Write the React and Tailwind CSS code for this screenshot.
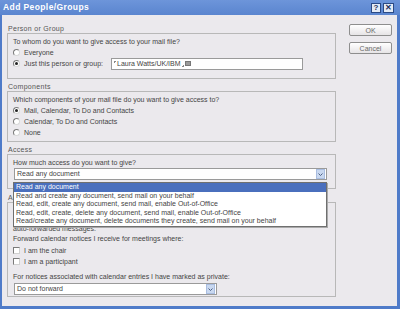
import React from "react";

const Radio = ({ checked }) => (
  <span className="w-[7px] h-[7px] rounded-full bg-white border border-[#7a7a7a] border-r-[#d8d8d8] border-b-[#d8d8d8] flex items-center justify-center shrink-0">
    {checked && <span className="w-[3px] h-[3px] rounded-full bg-[#222]" />}
  </span>
);

const Check = () => (
  <span className="w-[7px] h-[7px] bg-white border border-[#7a7a7a] border-r-[#d0d0d0] border-b-[#d0d0d0] shrink-0" />
);

const Arrow = () => (
  <span className="w-[9px] h-[10px] bg-[#c9d8f0] border border-[#a9bde0] flex items-center justify-center">
    <svg width="5" height="3" viewBox="0 0 5 3">
      <path d="M0.5 0.5 L2.5 2.5 L4.5 0.5" fill="none" stroke="#4d6185" strokeWidth="1" />
    </svg>
  </span>
);

const Line = ({ children, className = "" }) => (
  <div className={`h-[11px] leading-[11px] flex items-center gap-[4px] whitespace-nowrap ${className}`}>{children}</div>
);

const Label = ({ children }) => (
  <div className="h-[9px] leading-[9px] pl-[1px] text-[#555] tracking-[0.3px] whitespace-nowrap">{children}</div>
);

const App = () => {
  const options = [
    "Read any document",
    "Read and create any document, send mail on your behalf",
    "Read, edit, create any document, send mail, enable Out-of-Office",
    "Read, edit, create, delete any document, send mail, enable Out-of-Office",
    "Read/create any document, delete documents they create, send mail on your behalf",
  ];

  return (
    <div className="w-[400px] h-[309px] bg-[#4f7bc9] flex flex-col pl-[2px] pr-[3px] pb-[3px] font-['Liberation_Sans',Arial,sans-serif] text-[7px] text-[#444] overflow-hidden">
      <div className="h-[15px] -ml-[2px] -mr-[3px] bg-gradient-to-b from-[#6d95da] to-[#5a85cf] flex items-center justify-between pl-[3px] pr-[6px]">
        <span className="text-white font-bold text-[8.5px] tracking-[0.4px]">Add People/Groups</span>
        <div className="flex gap-[2px]">
          <span className="w-[10px] h-[10px] bg-[#e4ebf6] border border-[#2b4a85] flex items-center justify-center text-[#1d2f5a] font-bold text-[8px] leading-none">?</span>
          <span className="w-[11px] h-[10px] bg-[#e4ebf6] border border-[#2b4a85] flex items-center justify-center text-[#1d2f5a] font-bold text-[8px] leading-none">✕</span>
        </div>
      </div>

      <div className="flex-1 bg-[#ebe9ed] relative flex">
        <div className="w-[334px] pl-[5px] pt-[9px] flex flex-col">
          <Label>Person or Group</Label>
          <div className="h-[46px] border border-[#b8b8b8] pl-[5px] pt-[2px] flex flex-col">
            <Line>To whom do you want to give access to your mail file?</Line>
            <Line><Radio /> Everyone</Line>
            <Line>
              <Radio checked /> Just this person or group:
              <span className="ml-[4px] w-[192px] h-[12px] bg-white border border-[#9a9a9a] flex items-center pl-[2px] gap-[1px]">
                <span className="w-[2px] h-[2px] border-l border-t border-[#888] self-start mt-[2px]" />
                <span>Laura Watts/UK/IBM</span>
                <span className="w-[2px] h-[2px] border-r border-b border-[#888] self-end mb-[2px]" />
                <span className="w-[6px] h-[5px] bg-[#9a9a9a] border border-[#777]" />
              </span>
            </Line>
          </div>

          <div className="mt-[3px]"><Label>Components</Label></div>
          <div className="h-[51px] border border-[#b8b8b8] pl-[5px] pt-[2px] flex flex-col">
            <Line>Which components of your mail file do you want to give access to?</Line>
            <Line><Radio checked /> Mail, Calendar, To Do and Contacts</Line>
            <Line><Radio /> Calendar, To Do and Contacts</Line>
            <Line><Radio /> None</Line>
          </div>

          <div className="mt-[3px]"><Label>Access</Label></div>
          <div className="h-[35px] border border-[#b8b8b8] pl-[6px] pt-[2px] flex flex-col">
            <Line className="-ml-[1px]">How much access do you want to give?</Line>
            <div className="w-[313px] h-[12px] bg-white border border-[#9a9a9a] flex items-center justify-between pl-[2px] pr-[1px]">
              <span>Read any document</span>
              <Arrow />
            </div>
          </div>

          <div className="mt-[4px]"><Label>Auto</Label></div>
          <div className="h-[95px] border border-[#b8b8b8] pl-[5px] pt-[8px] flex flex-col">
            <div className="h-[11px]" />
            <Line className="translate-y-[1px]">auto-forwarded messages.</Line>
            <Line>Forward calendar notices I receive for meetings where:</Line>
            <Line className="mt-[1px] h-[10px]"><Check /> I am the chair</Line>
            <Line className="h-[10px]"><Check /> I am a participant</Line>
            <Line className="mt-[4px]">For notices associated with calendar entries I have marked as private:</Line>
            <div className="mt-[1px] ml-[1px] w-[203px] h-[12px] bg-white border border-[#9a9a9a] flex items-center justify-between pl-[2px] pr-[1px]">
              <span>Do not forward</span>
              <Arrow />
            </div>
          </div>
        </div>

        <div className="pl-[13px] pt-[9px] flex flex-col gap-[6px]">
          <button className="w-[43px] h-[12px] rounded-[2px] border border-[#8e8e8e] bg-gradient-to-b from-white to-[#e6e4e6] text-[#6a6a6a] text-[7px] leading-none">OK</button>
          <button className="w-[43px] h-[12px] rounded-[2px] border border-[#8e8e8e] bg-gradient-to-b from-white to-[#e6e4e6] text-[#6a6a6a] text-[7px] leading-none">Cancel</button>
        </div>

        <div className="absolute left-[11px] top-[167px] w-[314px] bg-white border border-[#6f6f6f] flex flex-col shadow-[1px_1px_0_#aaa]">
          {options.map((o, i) => (
            <div
              key={o}
              className={`h-[8.6px] leading-[8.6px] pl-[2px] whitespace-nowrap overflow-hidden ${i === 0 ? "bg-[#4a6fbd] text-white" : ""}`}
            >
              {o}
            </div>
          ))}
        </div>
      </div>
    </div>
  );
};

export default App;
